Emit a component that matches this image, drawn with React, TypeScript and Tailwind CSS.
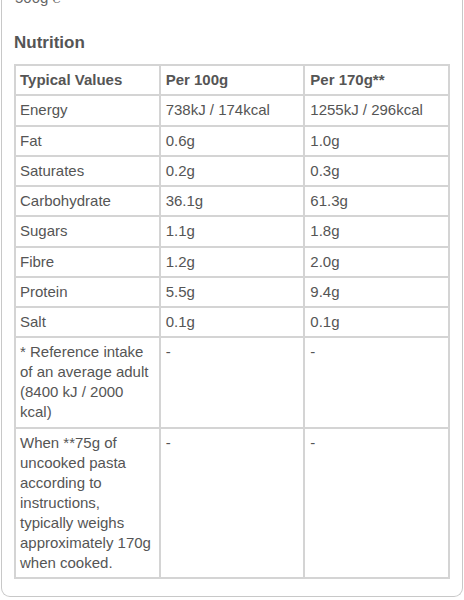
const rows: { label: string; per100: string; per170: string }[] = [
  { label: 'Energy', per100: '738kJ / 174kcal', per170: '1255kJ / 296kcal' },
  { label: 'Fat', per100: '0.6g', per170: '1.0g' },
  { label: 'Saturates', per100: '0.2g', per170: '0.3g' },
  { label: 'Carbohydrate', per100: '36.1g', per170: '61.3g' },
  { label: 'Sugars', per100: '1.1g', per170: '1.8g' },
  { label: 'Fibre', per100: '1.2g', per170: '2.0g' },
  { label: 'Protein', per100: '5.5g', per170: '9.4g' },
  { label: 'Salt', per100: '0.1g', per170: '0.1g' },
  { label: '* Reference intake of an average adult (8400 kJ / 2000 kcal)', per100: '-', per170: '-' },
  {
    label: 'When **75g of uncooked pasta according to instructions, typically weighs approximately 170g when cooked.',
    per100: '-',
    per170: '-'
  }
];

const cell = 'border-2 border-[#d4d4d4] pr-[5px] pt-[4px] pb-[4.25px] align-top text-left';

export default function App() {
  return (
    <div className="min-h-[600px] bg-white px-px pb-[2px] font-['Liberation_Sans',Arial,sans-serif] text-[15px] leading-5 text-[#555]">
      <div className="overflow-hidden rounded-b-[9px] border border-t-0 border-[#c8c8c8] px-3 pb-[17px]">
        {/* net weight line, scrolled mostly out of view */}
        <p className="-mt-[12px] h-[20px] pl-[1px] text-[#666]">500g ℮</p>

        <h2 className="mt-[25px] text-[17px] font-bold leading-5 text-[#555]">Nutrition</h2>

        <table className="mt-[11px] w-full table-fixed border-collapse">
          <thead>
            <tr>
              <th className={`${cell} pl-[4px] font-bold`}>Typical Values</th>
              <th className={`${cell} pl-[5px] font-bold`}>Per 100g</th>
              <th className={`${cell} pl-[5px] font-bold`}>Per 170g**</th>
            </tr>
          </thead>
          <tbody>
            {rows.map((r) => (
              <tr key={r.label}>
                <td className={`${cell} pl-[4px]`}>{r.label}</td>
                <td className={`${cell} pl-[5px]`}>{r.per100}</td>
                <td className={`${cell} pl-[5px]`}>{r.per170}</td>
              </tr>
            ))}
          </tbody>
        </table>
      </div>
    </div>
  );
}
